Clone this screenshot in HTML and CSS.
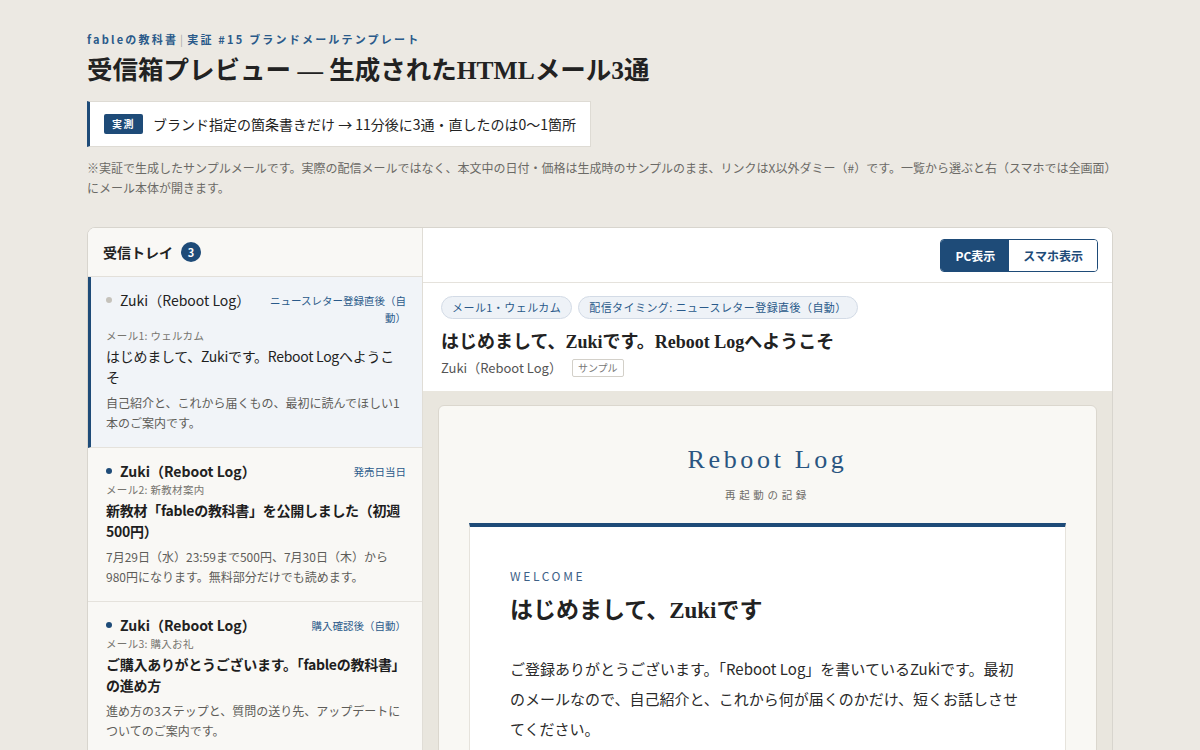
FILE: index.html
```html
<!DOCTYPE html>
<html lang="ja">
<head>
    <meta charset="utf-8">
    <title>受信箱プレビュー — 生成されたHTMLメール3通</title>
    <link rel="stylesheet" href="styles.css">
</head>
<body>
    <div class="page">
        <p class="eyebrow">fableの教科書<span class="sep">|</span>実証 #15 ブランドメールテンプレート</p>
        <h1 class="page-title">受信箱プレビュー — 生成されたHTMLメール3通</h1>

        <div class="callout">
            <span class="callout-badge">実測</span>
            <span class="callout-text">ブランド指定の箇条書きだけ → 11分後に3通・直したのは0〜1箇所</span>
        </div>

        <p class="note">※実証で生成したサンプルメールです。実際の配信メールではなく、本文中の日付・価格は生成時のサンプルのまま、リンクはX以外ダミー（#）です。一覧から選ぶと右（スマホでは全画面）にメール本体が開きます。</p>

        <div class="mailer">
            <!-- inbox list -->
            <aside class="inbox">
                <div class="inbox-head">
                    <span>受信トレイ</span>
                    <span class="count">3</span>
                </div>

                <div class="item selected">
                    <div class="item-top">
                        <span class="from"><span class="dot read"></span>Zuki（Reboot Log）</span>
                        <span class="when">ニュースレター登録直後（自動）</span>
                    </div>
                    <div class="item-meta">メール1: ウェルカム</div>
                    <div class="item-subject">はじめまして、Zukiです。Reboot Logへようこそ</div>
                    <div class="item-preview">自己紹介と、これから届くもの、最初に読んでほしい1本のご案内です。</div>
                </div>

                <div class="item unread">
                    <div class="item-top">
                        <span class="from"><span class="dot"></span>Zuki（Reboot Log）</span>
                        <span class="when">発売日当日</span>
                    </div>
                    <div class="item-meta">メール2: 新教材案内</div>
                    <div class="item-subject">新教材「fableの教科書」を公開しました（初週500円）</div>
                    <div class="item-preview">7月29日（水）23:59まで500円、7月30日（木）から980円になります。無料部分だけでも読めます。</div>
                </div>

                <div class="item unread">
                    <div class="item-top">
                        <span class="from"><span class="dot"></span>Zuki（Reboot Log）</span>
                        <span class="when">購入確認後（自動）</span>
                    </div>
                    <div class="item-meta">メール3: 購入お礼</div>
                    <div class="item-subject">ご購入ありがとうございます。「fableの教科書」の進め方</div>
                    <div class="item-preview">進め方の3ステップと、質問の送り先、アップデートについてのご案内です。</div>
                </div>
            </aside>

            <!-- reading pane -->
            <section class="reader">
                <div class="toolbar">
                    <div class="toggle">
                        <button class="active">PC表示</button>
                        <button>スマホ表示</button>
                    </div>
                </div>

                <div class="reader-meta">
                    <div class="tags">
                        <span class="tag">メール1・ウェルカム</span>
                        <span class="tag">配信タイミング: ニュースレター登録直後（自動）</span>
                    </div>
                    <h2 class="reader-title">はじめまして、Zukiです。Reboot Logへようこそ</h2>
                    <div class="reader-from">Zuki（Reboot Log）<span class="sample">サンプル</span></div>
                </div>

                <div class="preview">
                    <div class="email">
                        <div class="email-brand">
                            <div class="brand-name">Reboot Log</div>
                            <div class="brand-sub">再起動の記録</div>
                        </div>
                        <div class="email-body">
                            <p class="kicker">WELCOME</p>
                            <h3 class="email-heading">はじめまして、Zukiです</h3>
                            <p class="email-text">ご登録ありがとうございます。「Reboot Log」を書いているZukiです。最初のメールなので、自己紹介と、これから何が届くのかだけ、短くお話しさせてください。</p>
                            <p class="email-text">少し前まで、毎日同じことの繰り返しに疲れていました。このニュースレターは、そこから少しずつ立て直していく記録です。</p>
                        </div>
                    </div>
                </div>
            </section>
        </div>
    </div>
</body>
</html>
```

FILE: styles.css
```css
/* Base */
body {
    margin: 0;
    background-color: #ece9e3;
    color: #222;
    font-family: "Noto Sans CJK JP", "Noto Sans", sans-serif;
}
.page {
    width: 1026px;
    margin: 0 auto;
    padding-top: 31px;
}
.eyebrow {
    margin: 0;
    font-size: 11px;
    font-weight: 700;
    letter-spacing: 0.2em;
    color: #2a5a8a;
    line-height: 16px;
}
.eyebrow .sep {
    color: #aaa;
    font-weight: 400;
    margin: 0 2px;
}
.page-title {
    margin: 6px 0 0;
    font-family: "Liberation Serif", "Noto Sans CJK JP", serif;
    font-size: 25.5px;
    line-height: 36px;
    font-weight: 700;
    color: #222;
}
/* Callout */
.callout {
    display: inline-flex;
    align-items: center;
    gap: 10px;
    margin-top: 12px;
    padding: 0 14px 0 14px;
    height: 44px;
    background-color: #fff;
    border: 1px solid #dedbd4;
    border-left: 3px solid #1e4b78;
}
.callout-badge {
    display: inline-block;
    background-color: #1e4b78;
    color: #fff;
    font-size: 10px;
    font-weight: 700;
    letter-spacing: 0.15em;
    padding: 0 8px;
    line-height: 20px;
    border-radius: 2px;
}
.callout-text {
    font-size: 14px;
}
.note {
    margin: 11px 0 0;
    font-size: 12px;
    line-height: 20px;
    color: #6b6a66;
}
/* Mail card */
.mailer {
    display: grid;
    grid-template-columns: 335px 1fr;
    margin-top: 29px;
    background-color: #fff;
    border: 1px solid #d8d5ce;
    border-radius: 8px;
    overflow: hidden;
}
.inbox {
    background-color: #f9f8f5;
    border-right: 1px solid #e0ddd6;
}
.inbox-head {
    display: flex;
    align-items: center;
    gap: 8px;
    height: 48px;
    padding-left: 15px;
    font-size: 14px;
    font-weight: 700;
    border-bottom: 1px solid #e3e0da;
}
.count {
    display: inline-flex;
    align-items: center;
    justify-content: center;
    width: 20px;
    height: 20px;
    border-radius: 50%;
    background-color: #1e4b78;
    color: #fff;
    font-size: 11px;
}
.item {
    padding: 14px 16px 14px 18px;
    border-bottom: 1px solid #e5e2dc;
}
.item.selected {
    background-color: #f1f4f8;
    border-left: 3px solid #1e4b78;
    padding-left: 15px;
}
.item-top {
    display: flex;
    justify-content: space-between;
    align-items: flex-start;
    gap: 10px;
}
.from {
    display: flex;
    align-items: center;
    gap: 8px;
    font-size: 14px;
    line-height: 18px;
    white-space: nowrap;
}
.unread .from {
    font-weight: 700;
}
.dot {
    width: 6px;
    height: 6px;
    border-radius: 50%;
    background-color: #1e4b78;
}
.dot.read {
    background-color: #c5c2bb;
}
.when {
    font-size: 10.5px;
    line-height: 17px;
    color: #2a5a8a;
    text-align: right;
    max-width: 138px;
    padding-top: 1px;
}
.item-meta {
    margin-top: 2px;
    font-size: 10.5px;
    line-height: 16px;
    color: #77756f;
    letter-spacing: 0.03em;
}
.item-subject {
    margin-top: 2px;
    font-size: 14px;
    line-height: 21px;
    letter-spacing: -0.02em;
    color: #1e1e1e;
}
.unread .item-subject {
    font-weight: 700;
}
.item-preview {
    margin-top: 5px;
    font-size: 12px;
    line-height: 20px;
    color: #5e5d59;
}
/* Reading pane */
.reader {
    background-color: #fff;
}
.toolbar {
    display: flex;
    justify-content: flex-end;
    align-items: center;
    height: 54px;
    padding-right: 14px;
    border-bottom: 1px solid #e5e2dc;
}
.toggle {
    display: flex;
    border: 1px solid #1e4b78;
    border-radius: 4px;
    overflow: hidden;
}
.toggle button {
    border: 0;
    background-color: #fff;
    color: #1e4b78;
    font-family: inherit;
    font-size: 12px;
    font-weight: 700;
    height: 31px;
    padding: 0 14px;
}
.toggle button.active {
    background-color: #1e4b78;
    color: #fff;
}
.reader-meta {
    padding: 13px 18px 13px 18px;
}
.tags {
    display: flex;
    gap: 6px;
}
.tag {
    font-size: 11px;
    line-height: 21px;
    padding: 0 10px;
    color: #2a5a8a;
    background-color: #eef2f7;
    border: 1px solid #d3dbe6;
    border-radius: 12px;
    letter-spacing: 0.04em;
}
.reader-title {
    margin: 10px 0 0;
    font-family: "Liberation Serif", "Noto Sans CJK JP", serif;
    font-size: 18px;
    line-height: 26px;
    font-weight: 700;
}
.reader-from {
    display: flex;
    align-items: center;
    gap: 10px;
    margin-top: 3px;
    font-size: 13px;
    line-height: 20px;
    color: #555;
}
.sample {
    font-size: 10px;
    line-height: 16px;
    padding: 0 5px;
    border: 1px solid #d3d0c9;
    border-radius: 2px;
    color: #777;
}
.preview {
    background-color: #e9e6de;
    padding: 14px 15px 40px;
}
.email {
    background-color: #f9f8f4;
    border: 1px solid #dbd7ce;
    border-radius: 6px;
    padding: 0 30px 30px;
}
.email-brand {
    text-align: center;
    padding: 37px 0 21px;
}
.brand-name {
    font-family: "Liberation Serif", serif;
    font-size: 26px;
    line-height: 34px;
    letter-spacing: 0.14em;
    color: #2a5580;
}
.brand-sub {
    margin-top: 10px;
    font-size: 10.5px;
    letter-spacing: 0.35em;
    color: #6e6c68;
}
.email-body {
    background-color: #fff;
    border: 1px solid #e6e3dc;
    border-top: 4px solid #1e4b78;
    padding: 41px 40px 30px 40px;
}
.kicker {
    margin: 0;
    font-size: 12px;
    line-height: 16px;
    letter-spacing: 0.22em;
    color: #3d6187;
}
.email-heading {
    margin: 10px 0 0;
    font-family: "Liberation Serif", "Noto Sans CJK JP", serif;
    font-size: 23px;
    line-height: 34px;
    font-weight: 700;
}
.email-text {
    margin: 26px 0 0;
    font-size: 15px;
    line-height: 30px;
    color: #2a2a2a;
}
```
